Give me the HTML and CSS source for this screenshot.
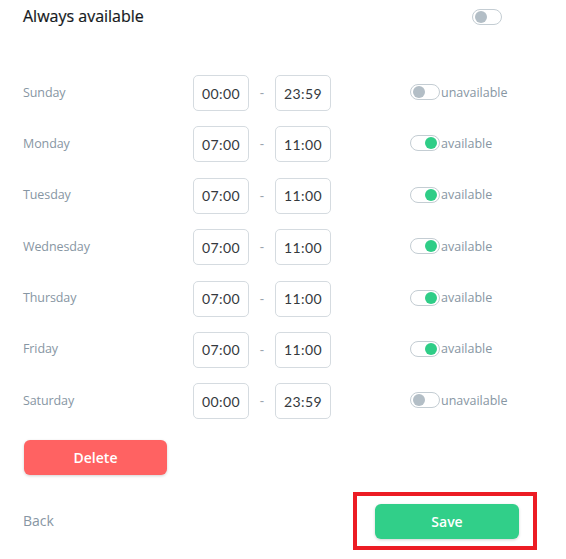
FILE: index.html
```html
<!DOCTYPE html>
<html>
<head>
<meta charset="utf-8">
<link rel="stylesheet" href="styles.css">
</head>
<body>
<div class="page">
  <div class="header">
    <span class="title">Always available</span>
    <span class="toggle"><span class="knob"></span></span>
  </div>
  <div class="days">
    <div class="row">
      <span class="day">Sunday</span>
      <span class="time">00:00</span><span class="dash">-</span><span class="time">23:59</span>
      <span class="status"><span class="toggle"><span class="knob"></span></span><span class="stext">unavailable</span></span>
    </div>
    <div class="row">
      <span class="day">Monday</span>
      <span class="time">07:00</span><span class="dash">-</span><span class="time">11:00</span>
      <span class="status"><span class="toggle on"><span class="knob"></span></span><span class="stext">available</span></span>
    </div>
    <div class="row">
      <span class="day">Tuesday</span>
      <span class="time">07:00</span><span class="dash">-</span><span class="time">11:00</span>
      <span class="status"><span class="toggle on"><span class="knob"></span></span><span class="stext">available</span></span>
    </div>
    <div class="row">
      <span class="day">Wednesday</span>
      <span class="time">07:00</span><span class="dash">-</span><span class="time">11:00</span>
      <span class="status"><span class="toggle on"><span class="knob"></span></span><span class="stext">available</span></span>
    </div>
    <div class="row">
      <span class="day">Thursday</span>
      <span class="time">07:00</span><span class="dash">-</span><span class="time">11:00</span>
      <span class="status"><span class="toggle on"><span class="knob"></span></span><span class="stext">available</span></span>
    </div>
    <div class="row">
      <span class="day">Friday</span>
      <span class="time">07:00</span><span class="dash">-</span><span class="time">11:00</span>
      <span class="status"><span class="toggle on"><span class="knob"></span></span><span class="stext">available</span></span>
    </div>
    <div class="row">
      <span class="day">Saturday</span>
      <span class="time">00:00</span><span class="dash">-</span><span class="time">23:59</span>
      <span class="status"><span class="toggle"><span class="knob"></span></span><span class="stext">unavailable</span></span>
    </div>
  </div>
  <div class="delete-wrap"><button class="btn delete">Delete</button></div>
  <div class="footer">
    <span class="back">Back</span>
    <div class="highlight"><button class="btn save">Save</button></div>
  </div>
</div>
</body>
</html>
```

FILE: styles.css
```css
html, body {
  margin: 0;
  padding: 0;
  background: #ffffff;
}
body {
  font-family: "Lato", "Open Sans", sans-serif;
}
.page {
  width: 566px;
  height: 559px;
  padding: 0 0 0 23px;
  box-sizing: border-box;
  display: flex;
  flex-direction: column;
}
.header {
  width: 479px;
  height: 33px;
  display: flex;
  align-items: center;
  justify-content: space-between;
}
.title {
  font-size: 16px;
  font-weight: 400;
  color: #15191c;
  font-family: "Open Sans", sans-serif;
  letter-spacing: 0;
  margin-top: -1px;
  -webkit-text-stroke: 0.2px #15191c;
}
.toggle {
  width: 30px;
  height: 16px;
  box-sizing: border-box;
  border: 1px solid #c4cdd3;
  border-radius: 9px;
  display: inline-flex;
  align-items: center;
  padding: 0 2px;
  background: #fff;
}
.knob {
  width: 12px;
  height: 12px;
  border-radius: 50%;
  background: #b3bec6;
}
.toggle.on {
  justify-content: flex-end;
}
.toggle.on .knob {
  background: #2fcd87;
}
.days {
  margin-top: 42px;
  display: flex;
  flex-direction: column;
  gap: 15.4px;
}
.row {
  height: 36px;
  display: flex;
  align-items: center;
}
.day {
  width: 170px;
  font-size: 12.5px;
  color: #8796a3;
  font-family: "Open Sans", sans-serif;
  letter-spacing: -0.1px;
  margin-top: -2px;
}
.time {
  width: 56px;
  height: 36px;
  box-sizing: border-box;
  border: 1px solid #d5dbe0;
  border-radius: 5px;
  display: flex;
  align-items: center;
  justify-content: center;
  font-size: 14px;
  font-weight: 400;
  color: #34393d;
  letter-spacing: 0.4px;
}
.dash {
  width: 26px;
  text-align: center;
  color: #9aa5ae;
  font-size: 13px;
}
.status {
  margin-left: 79px;
  display: flex;
  align-items: center;
  margin-top: -2px;
}
.stext {
  font-size: 12.5px;
  color: #8796a3;
  font-family: "Open Sans", sans-serif;
  letter-spacing: 0;
  margin-left: 1px;
}
.delete-wrap {
  margin-top: 21px;
  padding-left: 1px;
}
.btn {
  border: none;
  color: #fff;
  font-family: "Open Sans", sans-serif;
  font-weight: 600;
  font-size: 14px;
  border-radius: 6px;
  box-shadow: 0 1px 3px rgba(0,0,0,0.18);
  cursor: pointer;
}
.delete {
  width: 143px;
  height: 35px;
  background: #ff6262;
}
.footer {
  margin-top: 17px;
  display: flex;
  align-items: center;
  justify-content: space-between;
  width: 514px;
}
.back {
  font-size: 14px;
  color: #8796a3;
  font-family: "Open Sans", sans-serif;
  margin-top: -2px;
}
.highlight {
  width: 184px;
  height: 58px;
  box-sizing: border-box;
  border: 4px solid #ec1c24;
  padding: 8px 0 0 18px;
}
.save {
  width: 144px;
  height: 35px;
  background: #31cf89;
}
```
